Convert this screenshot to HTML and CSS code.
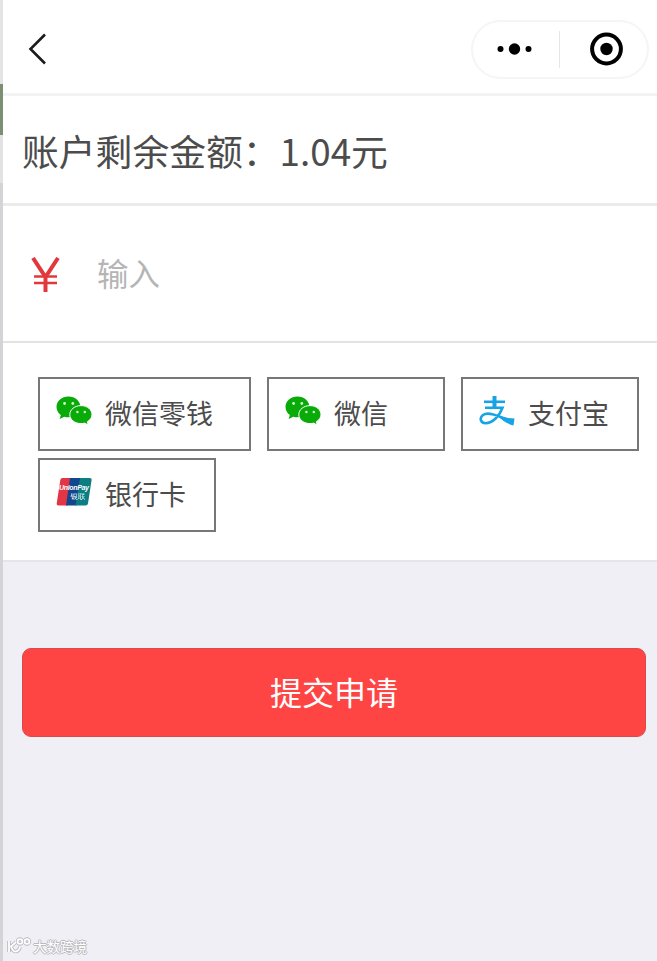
FILE: index.html
```html
<!DOCTYPE html>
<html lang="zh-CN">
<head>
    <meta charset="UTF-8">
    <meta name="viewport" content="width=device-width, initial-scale=1.0">
    <title>提现</title>
    <link rel="stylesheet" href="styles.css">
</head>
<body>
    <!-- shared icon shapes -->
    <svg class="defs" width="0" height="0">
        <symbol id="wechat" viewBox="0 0 36 30">
            <path fill="#09ab09" d="M12.500 .5C5.800 .5 .5 5 .5 11c0 3.200 1.700 6.100 4.300 8L3.700 23l4.500-2.300c1.400.4 2.800.6 4.300.6 6.700 0 12-4.600 12-10.300S19.200 .5 12.500 .5z"/>
            <path fill="#09ab09" stroke="#fff" stroke-width="1" d="M25 9.600c-6.300 0-11.200 4-11.200 9s4.900 9 11.200 9c1.300 0 2.500-.2 3.700-.5l3.500 1.900-.8-3.300c2.800-1.700 4.600-4.200 4.600-7.100 0-5-4.700-9-11-9z"/>
            <circle cx="8.600" cy="7.500" r="1.400" fill="#d5f5cc"/>
            <circle cx="16.800" cy="7.500" r="1.400" fill="#d5f5cc"/>
            <circle cx="21.400" cy="16" r="1.200" fill="#d5f5cc"/>
            <circle cx="28.800" cy="16" r="1.200" fill="#d5f5cc"/>
        </symbol>
    </svg>

    <header class="navbar">
        <svg class="back" width="20" height="34" viewBox="0 0 20 34">
            <path d="M18 2.500L3.500 17L18 31.500" fill="none" stroke="#1c1c1c" stroke-width="2.600"/>
        </svg>
        <div class="capsule">
            <svg width="36" height="14" viewBox="0 0 36 14">
                <circle cx="3.500" cy="7" r="3"/>
                <circle cx="17.500" cy="7" r="5.700"/>
                <circle cx="31.500" cy="7" r="3"/>
            </svg>
            <span class="divider"></span>
            <svg width="34" height="34" viewBox="0 0 34 34">
                <circle cx="17.500" cy="17" r="14.400" fill="none" stroke="#000" stroke-width="4"/>
                <circle cx="17.500" cy="17" r="6.200"/>
            </svg>
        </div>
    </header>

    <div class="balance">账户剩余金额：1.04元</div>

    <div class="amount">
        <svg class="yen" width="30" height="36" viewBox="0 0 30 36" fill="none" stroke="#e2383c">
            <path d="M2 1L14.500 20L27 1M14.500 19V35" stroke-width="4"/>
            <path d="M3 19.500H26M3 26H26" stroke-width="2.600"/>
        </svg>
        <input type="text" placeholder="输入">
    </div>

    <div class="methods">
        <div class="method wide">
            <svg width="36" height="30"><use href="#wechat"/></svg>
            <span>微信零钱</span>
        </div>
        <div class="method">
            <svg width="36" height="30"><use href="#wechat"/></svg>
            <span>微信</span>
        </div>
        <div class="method">
            <svg width="36" height="30" viewBox="0 0 36 30" fill="none" stroke="#18a3e4">
                <path d="M15.500 0V11" stroke-width="4"/>
                <path d="M5 5.800H26" stroke-width="2.600"/>
                <path d="M6 11.800H23.500C21 19 14 27.200 6.500 27.200C1.500 27.200 0 22 4 19C10 15 20 20.500 34.500 26" stroke-width="2.600"/>
                <path d="M18 19Q25 22.500 35.500 22.500L34.500 29.500Q25 27 18 19Z" fill="#18a3e4" stroke="none"/>
            </svg>
            <span>支付宝</span>
        </div>
        <div class="method">
            <svg width="36" height="30" viewBox="0 0 36 30">
                <path fill="#e23546" d="M6.500 1H16L11.500 28.500H2.500Q.3 28.500.7 26.500L4.300 3Q4.700 1 6.500 1z"/>
                <path fill="#12478e" d="M14 1H25L20.500 28.500H10z"/>
                <path fill="#0b7d83" d="M24 1H33.500Q36 1 35.600 3L32 26.500Q31.600 28.500 29.500 28.500H19.500z"/>
                <text x="3" y="13" class="union-en" textLength="30">UnionPay</text>
                <text x="14.500" y="21.500" class="union-cn">银联</text>
            </svg>
            <span>银行卡</span>
        </div>
    </div>

    <button class="submit">提交申请</button>

    <div class="edge"></div>
    <div class="watermark">
        <svg width="26" height="18" viewBox="0 0 26 18" fill="none">
            <g stroke="#b9b9be" stroke-width="3.600">
                <path d="M2 4V15M9 5L4 9.500Q6 15 9 14.500Q12 14 13 10"/>
                <circle cx="13" cy="4.500" r="2.400"/>
                <circle cx="20" cy="4.500" r="2.400"/>
            </g>
            <g stroke="#fff" stroke-width="1.800">
                <path d="M2 4V15M9 5L4 9.500Q6 15 9 14.500Q12 14 13 10"/>
                <circle cx="13" cy="4.500" r="2.400"/>
                <circle cx="20" cy="4.500" r="2.400"/>
            </g>
        </svg>
        <span>大数跨境</span>
    </div>
</body>
</html>
```
FILE: styles.css
```css
* {
    box-sizing: border-box;
}
body {
    margin: 0;
    padding-left: 3px;
    height: 961px;
    overflow: hidden;
    position: relative;
    background: #f0eff5;
    color: #4c4c4c;
    font-family: "Noto Sans CJK SC", sans-serif;
}
svg {
    display: block;
    flex-shrink: 0;
}
.defs {
    position: absolute;
}
.navbar {
    display: flex;
    align-items: center;
    justify-content: space-between;
    height: 96px;
    padding: 5px 8px 0 24px;
    background: #fff;
    border-bottom: 3px solid #f3f3f3;
}
.capsule {
    display: flex;
    align-items: center;
    justify-content: space-between;
    width: 178px;
    height: 59px;
    padding: 0 24px;
    border: 2px solid #f5f5f5;
    border-radius: 30px;
}
.divider {
    width: 1px;
    height: 37px;
    margin-right: 4px;
    background: #e6e6e6;
}
.balance {
    height: 110px;
    padding-left: 19px;
    background: #fff;
    border-bottom: 3px solid #ebebeb;
    font-size: 36.8px;
    line-height: 109px;
}
.amount {
    display: flex;
    align-items: center;
    height: 137px;
    padding: 0 0 1px 28px;
    background: #fff;
    border-bottom: 2px solid #e3e3e3;
}
.yen {
    margin-top: 4px;
}
.amount input {
    width: 500px;
    margin-left: 36px;
    padding: 0 0 3px;
    border: 0;
    outline: 0;
    font-family: inherit;
    font-size: 31.5px;
}
.amount input::placeholder {
    color: #b5b5b5;
}
.methods {
    display: flex;
    flex-wrap: wrap;
    align-content: flex-start;
    gap: 7px 16px;
    height: 219px;
    padding: 34px 16px 0 35px;
    background: #fff;
    border-bottom: 2px solid #e5e4e8;
}
.method {
    display: flex;
    align-items: center;
    width: 178px;
    height: 74px;
    padding: 0 0 7px 16px;
    border: 2px solid #777;
    font-size: 27px;
}
.method.wide {
    width: 213px;
}
.method span {
    margin: 5px 0 0 13px;
    line-height: 40px;
}
.union-en {
    fill: #fff;
    font: italic bold 7px/1 "Liberation Sans", sans-serif;
}
.union-cn {
    fill: #fff;
    font: bold 7.5px/1 "WenQuanYi Zen Hei", "Noto Sans CJK SC", sans-serif;
}
.submit {
    display: block;
    width: 624px;
    height: 89px;
    margin: 86px 0 0 19px;
    padding: 0 0 4px;
    border: 1px solid #d94a4a;
    border-radius: 9px;
    background: #ff4544;
    color: #fff;
    font-family: inherit;
    font-size: 32px;
}
/* strip of the page behind, visible on the left */
.edge {
    position: absolute;
    left: 0;
    top: 0;
    width: 3px;
    height: 961px;
    background: linear-gradient(#e4e4e4 84px, #7c8f72 84px, #7c8f72 135px, #e2e2e2 135px, #e2e2e2 183px, #d4d4d6 183px);
}
.watermark {
    position: absolute;
    left: 7px;
    bottom: 4px;
    display: flex;
    align-items: center;
    color: #fff;
    font-size: 13.5px;
    line-height: 22px;
    text-shadow: 1px 0 #b9b9be, -1px 0 #b9b9be, 0 1px #b9b9be, 0 -1px #b9b9be;
}
```
